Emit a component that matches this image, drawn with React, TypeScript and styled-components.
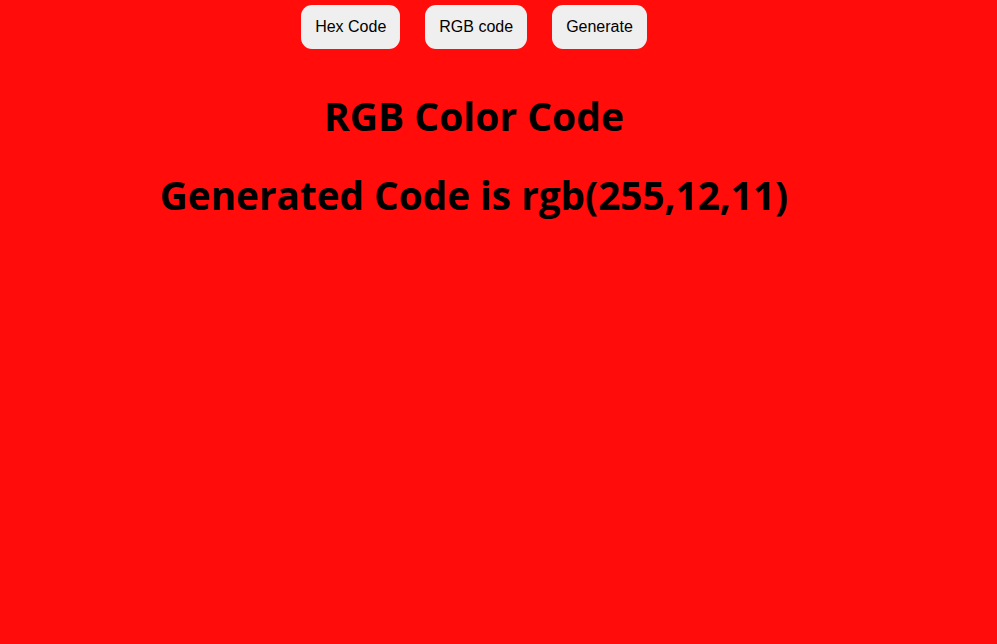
import React from "react";
import styled, { createGlobalStyle } from "styled-components";

const Global = createGlobalStyle`
  html, body { margin: 0; padding: 0; }
  body {
    background: rgb(255, 12, 11);
    min-height: 644px;
    font-family: "Liberation Sans", Arial, sans-serif;
  }
`;

const Page = styled.main`
  width: 948px;
  display: flex;
  flex-direction: column;
  align-items: center;
  padding-top: 5px;
`;

const Toolbar = styled.div`
  display: flex;
  gap: 25px;
`;

const Button = styled.button`
  font-family: "Liberation Sans", Arial, sans-serif;
  font-size: 16px;
  color: #000;
  background: #efefef;
  border: none;
  border-radius: 11px;
  height: 44px;
  padding: 0 14px;
  line-height: 18px;
  cursor: pointer;
`;

const Title = styled.h1`
  font-family: "Open Sans", "Noto Sans", sans-serif;
  font-weight: 700;
  font-size: 39px;
  line-height: 1.2;
  margin: 44px 0 0;
  color: #000;
`;

const Result = styled.h2`
  font-family: "Open Sans", "Noto Sans", sans-serif;
  font-weight: 700;
  font-size: 38.7px;
  line-height: 1.2;
  margin: 32px 0 0;
  color: #000;
`;

export default function App() {
  return (
    <>
      <Global />
      <Page>
        <Toolbar>
          <Button>Hex Code</Button>
          <Button>RGB code</Button>
          <Button>Generate</Button>
        </Toolbar>
        <Title>RGB Color Code</Title>
        <Result>Generated Code is rgb(255,12,11)</Result>
      </Page>
    </>
  );
}
